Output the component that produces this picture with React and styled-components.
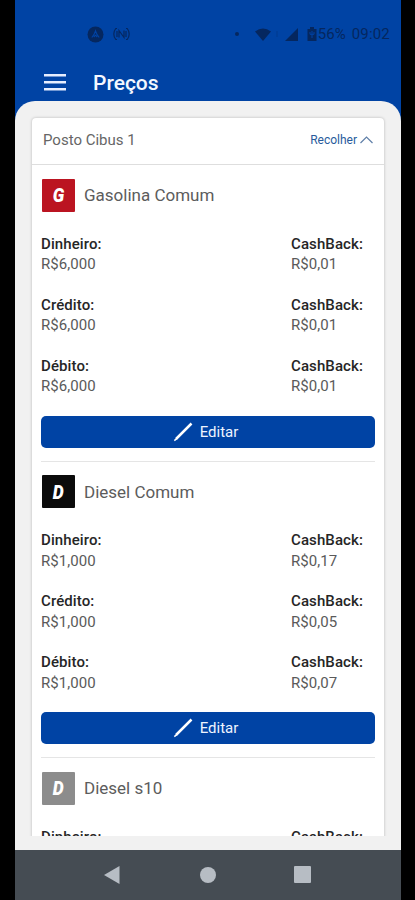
import React from 'react'
import styled, { createGlobalStyle } from 'styled-components'

const GlobalStyle = createGlobalStyle`
    * {
        box-sizing: border-box;
    }

    body {
        margin: 0;
        background: #000;
        font-family: Roboto, sans-serif;
    }
`;

const Phone = styled.div`
    width: 386px;
    height: 900px;
    margin-left: 15px;
    display: flex;
    flex-direction: column;
    overflow: hidden;
    background: #0043a4;
`;

const StatusBar = styled.div`
    height: 64px;
    flex-shrink: 0;
    display: flex;
    align-items: center;
    padding: 4px 11px 0 72px;
    color: #05275f;

    svg {
        display: block;
        flex-shrink: 0;
    }
`;

const StatusLeft = styled.div`
    display: flex;
    align-items: center;
    gap: 9px;
    flex: 1;
`;

const Dot = styled.span`
    width: 4px;
    height: 4px;
    margin-right: 16px;
    border-radius: 50%;
    background: currentColor;
`;

const StatusText = styled.span`
    font-size: 15px;
    line-height: 18px;
    letter-spacing: ${({ $spacing }) => $spacing || 0}px;
    margin-left: ${({ $gap }) => $gap || 0}px;
`;

const Header = styled.header`
    height: 37px;
    flex-shrink: 0;
    display: flex;
    align-items: center;
    gap: 27px;
    padding-left: 29px;

    h1 {
        margin: 0;
        font-size: 21px;
        line-height: 24px;
        font-weight: 500;
        color: #f4f8ff;
    }
`;

const Sheet = styled.main`
    height: 748.5px;
    flex-shrink: 0;
    padding: 17px 17px 13px;
    border-radius: 20px 20px 0 0;
    background: #f1f1f1;
`;

const Clip = styled.div`
    height: 718px;
    margin: -4px -4px 0;
    padding: 4px 4px 0;
    overflow: hidden;
    box-sizing: content-box;
`;

const Card = styled.section`
    border-radius: 4px;
    background: #fff;
    box-shadow: 0 0 3px rgba(0, 0, 0, 0.25);
`;

const CardHeader = styled.div`
    height: 47px;
    display: flex;
    align-items: center;
    justify-content: space-between;
    padding: 0 11px 3px;
    border-bottom: 1px solid #dedede;
    font-size: 15px;
    color: #666;
`;

const Collapse = styled.div`
    display: flex;
    align-items: center;
    gap: 3px;
    font-size: 12px;
    color: #285b9c;
`;

const Product = styled.article`
    margin: 0 9px;
    padding: 13.5px 0 13px;
    border-bottom: 1px solid #e5e5e5;
`;

const ProductTitle = styled.div`
    display: flex;
    align-items: center;
    gap: 9px;
    height: 33px;
    padding-left: 1px;
    margin-bottom: 22px;
    font-size: 17px;
    color: #5c5c5c;
`;

const Badge = styled.span`
    width: 33px;
    height: 33px;
    display: flex;
    align-items: center;
    justify-content: center;
    border-radius: 1px;
    background: ${({ $color }) => $color};
    color: #fff;
    font-size: 20px;
    font-weight: 900;
    font-style: italic;

    span {
        transform: scaleX(0.87);
    }
`;

const PriceRow = styled.div`
    display: flex;
    margin-bottom: 20px;
    font-size: 15px;
    line-height: 20.5px;
    letter-spacing: 0.05px;
    color: #5a5a5a;
`;

const Price = styled.div`
    width: ${({ $wide }) => ($wide ? '250px' : 'auto')};

    strong {
        display: block;
        font-weight: 500;
        letter-spacing: 0.1px;
        color: #262626;
    }
`;

const EditButton = styled.button`
    display: flex;
    align-items: center;
    justify-content: center;
    gap: 7px;
    width: 334px;
    height: 32px;
    margin-top: -1px;
    padding: 0 5px 0 0;
    border: 0;
    border-radius: 5px;
    background: #0043a4;
    color: #eef4ff;
    font-family: inherit;
    font-size: 15px;
`;

const NavBar = styled.nav`
    flex: 1;
    display: flex;
    justify-content: center;
    align-items: center;
    gap: 78px;
    background: #454c53;

    svg {
        display: block;
        fill: #b7bdc4;
    }
`;

const fuels = [
    { name: 'Gasolina Comum', letter: 'G', color: '#bb1421', price: 'R$6,000', cashback: ['R$0,01', 'R$0,01', 'R$0,01'] },
    { name: 'Diesel Comum', letter: 'D', color: '#0b0b0b', price: 'R$1,000', cashback: ['R$0,17', 'R$0,05', 'R$0,07'] },
    { name: 'Diesel s10', letter: 'D', color: '#8c8c8c', cashback: [''] },
]

const methods = ['Dinheiro:', 'Crédito:', 'Débito:']

function Status() {
    return (
        <StatusBar>
            <StatusLeft>
                <svg width='17' height='17' viewBox='0 0 17 17'>
                    <circle cx='8.5' cy='8.5' r='8' fill='currentColor' />
                    <path d='M4.8 11.5Q7.5 8.5 8.5 5q1 3.5 3.7 6.5M6.8 11l1.7-1.8 1.7 1.8' fill='none' stroke='#0043a4' strokeWidth='1.1' />
                </svg>
                <svg width='17' height='14' viewBox='0 0 17 14' fill='none' stroke='currentColor' strokeWidth='1.2'>
                    <path d='M4 1.5H2.8Q.8 4 .8 7t2 5.5H4M13 1.5h1.2q2 2.5 2 5.5t-2 5.5H13M4 4v6M6 10.5v-7l5 7v-7M13 4v6' />
                </svg>
            </StatusLeft>
            <Dot />
            <svg width='16' height='13' viewBox='0 0 16 13' fill='currentColor'>
                <path d='M0 3.5Q8-2.5 16 3.5L8 13z' />
            </svg>
            <svg width='14' height='13' viewBox='0 0 14 13' fill='none' stroke='currentColor' opacity='.3'>
                <path d='M6 3v6' />
            </svg>
            <svg width='13' height='13' viewBox='0 0 13 13' fill='currentColor'>
                <path d='M13 0v13H0z' />
            </svg>
            <svg width='20' height='14' viewBox='0 0 20 14'>
                <path d='M12 0h4v2h2.5v12h-9V2H12z' fill='currentColor' />
                <path d='M14 4v7M12 5v2.3h4V5' fill='none' stroke='#0043a4' />
            </svg>
            <StatusText>56%</StatusText>
            <StatusText $gap={6} $spacing={0.2}>09:02</StatusText>
        </StatusBar>
    )
}

function Fuel({ fuel }) {
    return (
        <Product>
            <ProductTitle>
                <Badge $color={fuel.color}><span>{fuel.letter}</span></Badge>
                {fuel.name}
            </ProductTitle>
            {fuel.cashback.map((cashback, i) => (
                <PriceRow key={methods[i]}>
                    <Price $wide>
                        <strong>{methods[i]}</strong>
                        {fuel.price}
                    </Price>
                    <Price>
                        <strong>CashBack:</strong>
                        {cashback}
                    </Price>
                </PriceRow>
            ))}
            {fuel.price && (
                <EditButton>
                    <svg width='20' height='20' viewBox='0 0 20 20' stroke='#fff'>
                        <path d='M3 17 18.5 1.5' strokeWidth='2.5' />
                        <path d='M1.3 18.7l2.5-2' strokeWidth='1.5' />
                    </svg>
                    Editar
                </EditButton>
            )}
        </Product>
    )
}

function App() {
    return (
        <Phone>
            <GlobalStyle />
            <Status />
            <Header>
                <svg width='22' height='17' viewBox='0 0 22 17' fill='#e6eeff'>
                    <path d='M0 0h22v2.5H0zM0 7h22v2.5H0zM0 14h22v2.5H0z' />
                </svg>
                <h1>Preços</h1>
            </Header>
            <Sheet>
                <Clip>
                    <Card>
                        <CardHeader>
                            Posto Cibus 1
                            <Collapse>
                                Recolher
                                <svg width='13' height='8' viewBox='0 0 13 8' fill='none' stroke='#5f7fa8' strokeWidth='1.2'>
                                    <path d='M.5 7 6.5 1l6 6' />
                                </svg>
                            </Collapse>
                        </CardHeader>
                        {fuels.map((fuel) => <Fuel key={fuel.name} fuel={fuel} />)}
                    </Card>
                </Clip>
            </Sheet>
            <NavBar>
                <svg width='18' height='18' viewBox='0 0 18 18'><path d='M0 9 15.5 0v18z' /></svg>
                <svg width='16' height='16' viewBox='0 0 16 16'><circle cx='8' cy='8' r='8' /></svg>
                <svg width='18' height='18' viewBox='0 0 18 18'><rect width='17' height='17' rx='1' /></svg>
            </NavBar>
        </Phone>
    )
}

export default App
